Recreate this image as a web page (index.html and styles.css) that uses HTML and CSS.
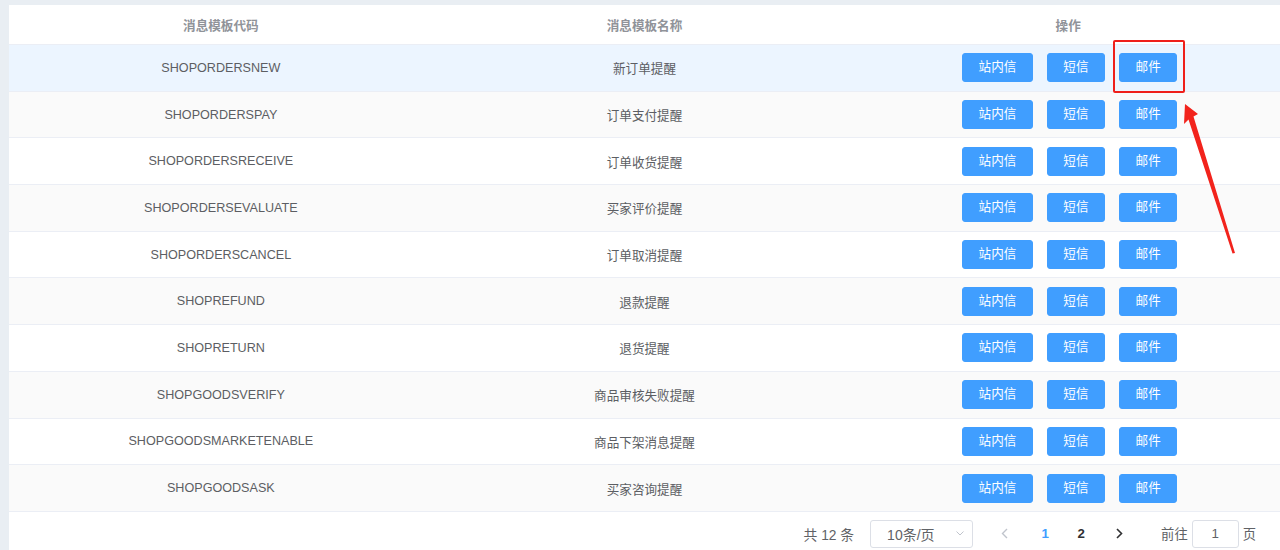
FILE: index.html
```html
<!DOCTYPE html>
<html lang="zh-CN">
<head>
<meta charset="utf-8">
<title>消息模板</title>
<link rel="stylesheet" href="styles.css">
</head>
<body>
<div class="card">
  <table class="tbl">
    <colgroup><col><col><col></colgroup>
    <thead>
      <tr><th>消息模板代码</th><th>消息模板名称</th><th>操作</th></tr>
    </thead>
    <tbody>
      <tr class="hover"><td>SHOPORDERSNEW</td><td>新订单提醒</td><td><div class="ops"><span class="btn w3">站内信</span><span class="btn">短信</span><span class="btn">邮件</span></div></td></tr>
      <tr class="stripe"><td>SHOPORDERSPAY</td><td>订单支付提醒</td><td><div class="ops"><span class="btn w3">站内信</span><span class="btn">短信</span><span class="btn">邮件</span></div></td></tr>
      <tr><td>SHOPORDERSRECEIVE</td><td>订单收货提醒</td><td><div class="ops"><span class="btn w3">站内信</span><span class="btn">短信</span><span class="btn">邮件</span></div></td></tr>
      <tr class="stripe"><td>SHOPORDERSEVALUATE</td><td>买家评价提醒</td><td><div class="ops"><span class="btn w3">站内信</span><span class="btn">短信</span><span class="btn">邮件</span></div></td></tr>
      <tr><td>SHOPORDERSCANCEL</td><td>订单取消提醒</td><td><div class="ops"><span class="btn w3">站内信</span><span class="btn">短信</span><span class="btn">邮件</span></div></td></tr>
      <tr class="stripe"><td>SHOPREFUND</td><td>退款提醒</td><td><div class="ops"><span class="btn w3">站内信</span><span class="btn">短信</span><span class="btn">邮件</span></div></td></tr>
      <tr><td>SHOPRETURN</td><td>退货提醒</td><td><div class="ops"><span class="btn w3">站内信</span><span class="btn">短信</span><span class="btn">邮件</span></div></td></tr>
      <tr class="stripe"><td>SHOPGOODSVERIFY</td><td>商品审核失败提醒</td><td><div class="ops"><span class="btn w3">站内信</span><span class="btn">短信</span><span class="btn">邮件</span></div></td></tr>
      <tr><td>SHOPGOODSMARKETENABLE</td><td>商品下架消息提醒</td><td><div class="ops"><span class="btn w3">站内信</span><span class="btn">短信</span><span class="btn">邮件</span></div></td></tr>
      <tr class="stripe"><td>SHOPGOODSASK</td><td>买家咨询提醒</td><td><div class="ops"><span class="btn w3">站内信</span><span class="btn">短信</span><span class="btn">邮件</span></div></td></tr>
    </tbody>
  </table>

  <div class="pager">
    <span class="total">共 12 条</span>
    <div class="sizes">
      <span class="sizes-text">10条/页</span>
      <svg class="caret" width="8" height="5" viewBox="0 0 8 5"><polyline points="0.5,0.5 4,4 7.5,0.5" fill="none" stroke="#c0c4cc" stroke-width="1"/></svg>
    </div>
    <span class="nav prev"><svg width="7" height="11" viewBox="0 0 7 11"><polyline points="6,1 1.5,5.5 6,10" fill="none" stroke="#c0c4cc" stroke-width="1.4"/></svg></span>
    <span class="num active">1</span>
    <span class="num">2</span>
    <span class="nav next"><svg width="7" height="11" viewBox="0 0 7 11"><polyline points="1,1 5.5,5.5 1,10" fill="none" stroke="#303133" stroke-width="1.6"/></svg></span>
    <span class="goto">前往</span>
    <span class="jump">1</span>
    <span class="goto-end">页</span>
  </div>
</div>

<div class="mark-box"></div>
<svg class="mark-arrow" width="1280" height="550" viewBox="0 0 1280 550">
  <polygon points="1185,104 1198,114 1193.5,116.5 1235,253 1232.5,253.5 1188.5,119.5 1184,124" fill="#f2231c"/>
</svg>
</body>
</html>
```

FILE: styles.css
```css
html, body {
  margin: 0;
  padding: 0;
}
body {
  width: 1280px;
  height: 550px;
  overflow: hidden;
  background: #e9eef3;
  font-family: "Liberation Sans", "Noto Sans CJK SC", sans-serif;
  position: relative;
}
.card {
  margin: 5px 0 0 9px;
  background: #fff;
  height: 545px;
}
.tbl {
  width: 100%;
  table-layout: fixed;
  border-collapse: separate;
  border-spacing: 0;
}
.tbl th,
.tbl td {
  padding: 0;
  text-align: center;
  border-bottom: 1px solid #ebeef5;
  font-size: 12.6px;
  box-sizing: border-box;
}
.tbl th {
  height: 40px;
  color: #909399;
  font-weight: bold;
}
.tbl td {
  height: 46.7px;
  color: #5c5e63;
}
.tbl tr.stripe td {
  background: #fafafa;
}
.tbl tr.hover td {
  background: #ecf5ff;
}
.ops {
  display: flex;
  justify-content: center;
  gap: 14px;
  padding-left: 3px;
}
.btn {
  display: inline-block;
  height: 29px;
  line-height: 27px;
  box-sizing: border-box;
  padding: 0 15.5px;
  border: 1px solid #409eff;
  background: #409eff;
  color: #fff;
  border-radius: 3px;
  font-size: 12.6px;
}
.pager {
  display: flex;
  align-items: center;
  justify-content: flex-end;
  height: 28px;
  margin-top: 8px;
  padding-right: 24px;
  font-size: 13.3px;
  color: #606266;
}
.total {
  margin-right: 16px;
  font-size: 13.8px;
}
.sizes {
  width: 103px;
  height: 28px;
  box-sizing: border-box;
  border: 1px solid #dcdfe6;
  border-radius: 3px;
  display: flex;
  align-items: center;
  justify-content: space-between;
  padding: 0 8px 0 16px;
  font-size: 14px;
  color: #606266;
  margin-right: 17px;
}
.nav {
  width: 28px;
  height: 28px;
  display: flex;
  align-items: center;
  justify-content: center;
}
.prev {
  margin-right: 9px;
}
.next {
  margin-left: 6px;
}
.num {
  width: 36px;
  text-align: center;
  font-weight: bold;
  color: #303133;
  font-size: 13.3px;
}
.num.active {
  color: #409eff;
}
.goto {
  margin-left: 28px;
}
.jump {
  width: 47px;
  height: 28px;
  box-sizing: border-box;
  border: 1px solid #dcdfe6;
  border-radius: 3px;
  margin: 0 4px;
  display: flex;
  align-items: center;
  justify-content: center;
  color: #606266;
}
.mark-box {
  position: absolute;
  left: 1113px;
  top: 40px;
  width: 72px;
  height: 53px;
  box-sizing: border-box;
  border: 2px solid #ef1f1a;
  border-radius: 2px;
}
.mark-arrow {
  position: absolute;
  left: 0;
  top: 0;
  pointer-events: none;
}
```
